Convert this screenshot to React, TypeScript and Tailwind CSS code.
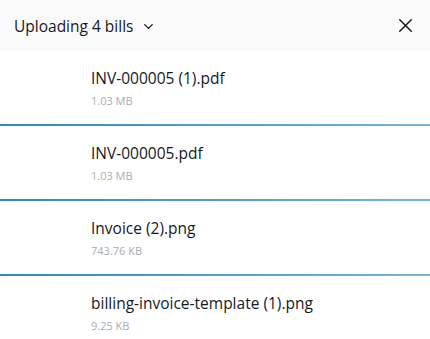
import { ChevronDown, X } from 'lucide-react';

const files = [
  { name: 'INV-000005 (1).pdf', size: '1.03 MB' },
  { name: 'INV-000005.pdf', size: '1.03 MB' },
  { name: 'Invoice (2).png', size: '743.76 KB' },
  { name: 'billing-invoice-template (1).png', size: '9.25 KB' },
];

export default function App() {
  return (
    <div className="w-[430px] h-[339px] overflow-hidden bg-white text-[#16191f] font-['Open_Sans',sans-serif]">
      <div className="h-[51px] bg-[#fafafa] flex items-center justify-between pl-[14px] pr-[13px]">
        <div className="flex items-center">
          <span className="text-[15.5px] leading-[20px]">Uploading 4 bills</span>
          <ChevronDown size={15} strokeWidth={2.2} className="ml-[8px] mt-[1px]" />
        </div>
        <X size={23} strokeWidth={1.5} />
      </div>
      {files.map((f, i) => (
        <div key={f.name} className="h-[75px] flex flex-col">
          <div className="flex-1 pl-[91px] pt-[16px]">
            <div className="text-[15.5px] leading-[22px]">{f.name}</div>
            <div className="text-[11px] leading-[16px] mt-[4px] text-[#a8aeb5]">{f.size}</div>
          </div>
          {i < files.length - 1 && (
            <div className="h-[2px] bg-gradient-to-r from-[#2a8bc0] to-[#74b5d4]" />
          )}
        </div>
      ))}
    </div>
  );
}
